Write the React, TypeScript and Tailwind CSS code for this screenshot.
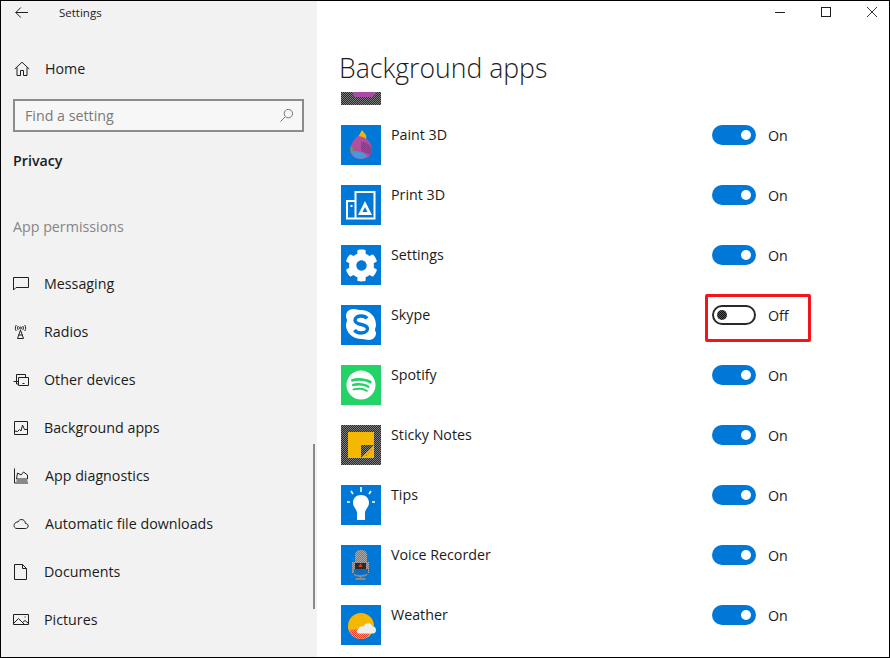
import type { ReactNode } from "react";
import { FaCog, FaSpotify } from "react-icons/fa";

const font = "font-['Open_Sans','Noto_Sans',sans-serif]";

function Glyph({ children, className = "" }: { children: ReactNode; className?: string }) {
  return (
    <svg viewBox="0 0 16 16" width="16" height="16" fill="none" stroke="#1f1f1f" strokeWidth="1" className={className}>
      {children}
    </svg>
  );
}

const navItems: { label: string; gap: string; icon: ReactNode }[] = [
  {
    label: "Messaging",
    gap: "ml-[15px]",
    icon: <path d="M.5 1.500h15v10H3l-2.500 2.500z" />,
  },
  {
    label: "Radios",
    gap: "ml-[15px]",
    icon: (
      <>
        <path d="M7.500 6 4.500 14.500M7.500 6l3 8.500M5.500 11h4M4.500 14.500h6" />
        <circle cx="7.500" cy="4" r="1" />
        <path d="M5.300 2c-.9 1.300-.9 2.700 0 4M9.700 2c.9 1.300.9 2.700 0 4M3.300 1c-1.300 2-1.300 4.500 0 6M11.700 1c1.300 2 1.300 4.500 0 6" />
      </>
    ),
  },
  {
    label: "Other devices",
    gap: "ml-[15px]",
    icon: <path d="M3.500 9.500V2.500h9v3M.5 9.500h5M5.500 5.500h10v8h-10zM9.500 11.500h2M3.500 9.500v2.500h2" />,
  },
  {
    label: "Background apps",
    gap: "ml-[15px]",
    icon: <path d="M1.500 1.500h13v13h-13zM1.500 11l3 .5 2-2 1.500 1.500 1.500-6 2 4.500h3" />,
  },
  {
    label: "App diagnostics",
    gap: "ml-[16px]",
    icon: <path d="M1.500.5v14.500h13.500M3.500 11l1-6 3.500 2 2.500-3 4 3v4zM3.500 13h11" />,
  },
  {
    label: "Automatic file downloads",
    gap: "ml-[16px]",
    icon: <path d="M4 12.500h8.500c3.500 0 3.500-5 0-5-.5-5-6.500-5-7.500-1.500C.5 5.500-.5 12.500 4 12.500z" />,
  },
  {
    label: "Documents",
    gap: "ml-[15px]",
    icon: <path d="M1.500 .5h8l4 4v11h-12zM9.500 .5v4h4" />,
  },
  {
    label: "Pictures",
    gap: "ml-[15px]",
    icon: <path d="M.5 2.500h15v10H.5zM.5 11.500l5-5 6 6M9.500 10.500l2.500-2 3.500 3M11.500 5h1" />,
  },
];

// the reference was saved with few colours, so fills come out as a 2px dither
function Dots({ id, base, dot }: { id: string; base: string; dot: string }) {
  return (
    <defs>
      <pattern id={id} width="2" height="2" patternUnits="userSpaceOnUse">
        <rect width="2" height="2" fill={base} />
        <rect width="1" height="1" fill={dot} />
        <rect x="1" y="1" width="1" height="1" fill={dot} />
      </pattern>
    </defs>
  );
}

function Tile({ children }: { children: ReactNode }) {
  return (
    <svg viewBox="0 0 40 40" width="40" height="40" className="block shrink-0">
      {children}
    </svg>
  );
}

const blue = <rect width="40" height="40" fill="#0078d7" />;

const apps: { name: string; off?: boolean; tile: ReactNode }[] = [
  {
    name: "Paint 3D",
    tile: (
      <Tile>
        <Dots id="paintRed" base="#e0303f" dot="#8a3d8c" />
        {blue}
        <path d="M21 5l4 5 .5 6-9-3z" fill="#f2b600" />
        <path d="M17 11c-4 3-8 9-8 14 0 5 4 9 11 9 7 0 11-4 11-10 0-6-5-12-14-13z" fill="#b3509c" />
        <path d="M20 17c5-1 9 3 11 7 0 3-1 5-2 6l-9-4z" fill="url(#paintRed)" />
        <path d="M10 26c5 0 11 0 16 5-2 2-4 3-6 3-5 0-9-3-10-8z" fill="#4a98d8" />
        <path d="M9 22l3 1-1 6c-1-2-2-4-2-7z" fill="#36b56a" />
      </Tile>
    ),
  },
  {
    name: "Print 3D",
    tile: (
      <Tile>
        {blue}
        <path d="M14.500 16V7h19v26.500h-19M14.500 16H6v17.500h8.500z" fill="none" stroke="#fff" strokeWidth="2" />
        <path d="M24 16 17 30h14zM24 22l-2.500 5h5z" fill="#fff" fillRule="evenodd" />
        <rect x="9.500" y="20" width="2" height="2" fill="#fff" />
      </Tile>
    ),
  },
  {
    name: "Settings",
    tile: (
      <div className="flex h-10 w-10 items-center justify-center bg-[#0078d7]">
        <FaCog size={33} color="#fff" />
      </div>
    ),
  },
  {
    name: "Skype",
    off: true,
    tile: (
      <Tile>
        {blue}
        <path d="M12 4c3 0 4 1 8 1 8 0 15 6 15 15 0 2-1 3-1 5 0 1 1 2 1 3 0 4-3 7-7 7-3 0-4-1-7-1C12 34 5 28 5 20c0-2 1-3 1-5 0-1-1-2-1-4 0-4 3-7 7-7z" fill="#fff" />
        <path d="M26 13.500c-1-1.500-3-2.500-6-2.500-3.500 0-6 1.500-6 4.200 0 5.800 12.500 2.800 12.500 8.600 0 2.700-3 4.200-6.500 4.200-3 0-5.200-1-6.500-3" fill="none" stroke="#0078d7" strokeWidth="3.400" />
      </Tile>
    ),
  },
  {
    name: "Spotify",
    tile: (
      <div className="flex h-10 w-10 items-center justify-center bg-[#23d366]">
        <FaSpotify size={30} color="#fff" />
      </div>
    ),
  },
  {
    name: "Sticky Notes",
    tile: (
      <Tile>
        <Dots id="sticky" base="#2a2a2a" dot="#7c7c7c" />
        <rect width="40" height="40" fill="url(#sticky)" />
        <rect x="7" y="7" width="26" height="26" fill="#f5b800" />
        <path d="M20 20h13L20 33z" fill="url(#sticky)" />
        <path d="M25 31l7-8" stroke="#e8452a" strokeWidth="1" strokeDasharray="1.500 2" />
      </Tile>
    ),
  },
  {
    name: "Tips",
    tile: (
      <Tile>
        {blue}
        <path d="M20 10c-5 0-8 3.500-8 8 0 3.500 3 5.500 4 9v8h8v-8c1-3.500 4-5.500 4-9 0-4.500-3-8-8-8z" fill="#fff" />
        <path d="M20 2v5M10 6l2 3M30 6l-2 3M6 17h3M31 17h3" stroke="#fff" strokeWidth="1.600" />
      </Tile>
    ),
  },
  {
    name: "Voice Recorder",
    tile: (
      <Tile>
        <Dots id="mic" base="#7a7a7a" dot="#a8a8a8" />
        {blue}
        <rect x="14" y="5" width="12" height="21" rx="5" fill="url(#mic)" />
        <rect x="11" y="17" width="17" height="11" fill="url(#mic)" />
        <path d="M13 24h14v5H13z" fill="#1669b5" />
        <path d="M14 18h11v6H14z" fill="#2a2a2a" />
        <path d="M19.500 18l2 4h-4z" fill="#e33a24" />
        <path d="M13 29c1 1.500 3 2 6.500 2s5.500-.5 6.500-2" fill="none" stroke="#8a8a8a" strokeWidth="1.600" />
        <path d="M19.500 31v3M14.500 34h10" stroke="#8a8a8a" strokeWidth="2" />
      </Tile>
    ),
  },
  {
    name: "Weather",
    tile: (
      <Tile>
        <Dots id="sunset" base="#f5b800" dot="#e8412a" />
        {blue}
        <circle cx="20" cy="21" r="13" fill="#f5b800" />
        <path d="M8 25c3 0 6-1 9-1l12 5c-2 3-5 5-9 5-6 0-10-4-12-9z" fill="url(#sunset)" />
        <path d="M18 28.500c-2.500 0-3.500-3.500-.5-4.500 0-2 3-3.500 5-2.500 1.500-4.500 8-4 9 0 2.500 0 3.500 1.500 3.500 3.500s-1 3.500-3 3.500z" fill="#eeeeee" />
      </Tile>
    ),
  },
];

function Toggle({ off }: { off?: boolean }) {
  if (off) {
    return (
      <div className="flex h-5 w-11 items-center rounded-full border-2 border-[#2a2a2a] bg-white pl-[3px]">
        <svg viewBox="0 0 10 10" width="10" height="10" className="block">
          <Dots id="thumb" base="#111111" dot="#555555" />
          <circle cx="5" cy="5" r="5" fill="url(#thumb)" />
        </svg>
      </div>
    );
  }
  return (
    <div className="flex h-5 w-11 items-center justify-end rounded-full bg-[#0078d7] pr-[5px]">
      <div className="h-[10px] w-[10px] rounded-full bg-white" />
    </div>
  );
}

export default function App() {
  return (
    <div className={`${font} relative flex h-[658px] w-[890px] overflow-hidden border border-black bg-white text-[14.25px] text-[#1b1b1b] antialiased`}>
      <aside className="relative flex w-[316px] shrink-0 flex-col bg-[#f2f2f2]">
        <div className="flex h-[24px] items-center pl-[14px]">
          <svg viewBox="0 0 13 11" width="13" height="11" fill="none" stroke="#1f1f1f" strokeWidth="1" className="-mt-[2px]">
            <path d="M13 5.500H.8M5.800.5l-5 5 5 5" />
          </svg>
          <span className="ml-[31px] text-[11.500px]">Settings</span>
        </div>

        <div className="mt-[20px] flex h-[48px] items-center pl-[13px]">
          <Glyph>
            <path d="M.8 8 8 1.200 15.200 8M3 6.500v8h3.500v-5h3v5H13v-8" />
          </Glyph>
          <span className="ml-[15px]">Home</span>
        </div>

        <div className="ml-[12px] mr-[13px] mt-[6px] flex h-[33px] items-center justify-between border-2 border-[#8c8c8c] bg-[#f7f7f7] pl-[10px] pr-[8px] text-[#7a7a7a]">
          <span>Find a setting</span>
          <svg viewBox="0 0 16 16" width="15" height="15" fill="none" stroke="#6f6f6f" strokeWidth="1">
            <circle cx="10" cy="6" r="4.500" />
            <path d="M6.800 9.200 1.500 14.500" />
          </svg>
        </div>

        <div className="mt-[19px] pl-[12px] font-semibold leading-[20px]">Privacy</div>
        <div className="mt-[46px] pl-[12px] leading-[20px] text-[#858585]">App permissions</div>

        <nav className="mt-[23px] flex flex-col">
          {navItems.map((item) => (
            <div key={item.label} className="flex h-[48px] items-center pl-[12px]">
              <Glyph>{item.icon}</Glyph>
              <span className={item.gap}>{item.label}</span>
            </div>
          ))}
        </nav>

        <div className="absolute left-[312px] top-[443px] h-[165px] w-[2px] bg-[#8a8a8a]" />
      </aside>

      <main className="flex min-w-0 flex-1 flex-col">
        <div className="flex h-[22px] items-center justify-end gap-[36px] pr-[12px]">
          <div className="h-px w-[10px] bg-[#1f1f1f]" />
          <div className="h-[10px] w-[10px] border border-[#1f1f1f]" />
          <svg viewBox="0 0 10 10" width="10" height="10" fill="none" stroke="#1f1f1f" strokeWidth="0.900">
            <path d="M0 0l10 10M10 0 0 10" />
          </svg>
        </div>

        <h1 className="ml-[22px] mt-[22px] text-[26.600px] font-light leading-[46px]">Background apps</h1>

        <div className="mt-[1px] min-h-0 flex-1 overflow-hidden pl-[24px]">
          <div className="flex h-[13px] items-end overflow-hidden">
            <Tile>
              <Dots id="partial" base="#2a2a2a" dot="#7c7c7c" />
              <rect width="40" height="40" fill="url(#partial)" />
              <path d="M12 27h23l-3 5H13z" fill="#a84aa8" />
            </Tile>
          </div>
          <div className="flex flex-col pt-[20px]">
            {apps.map((app) => (
              <div key={app.name} className="relative flex h-[60px] items-start">
                {app.tile}
                <span className="ml-[10px] w-[321px] leading-[20px]">{app.name}</span>
                <Toggle off={app.off} />
                <span className="ml-[12px] mt-px leading-[20px]">{app.off ? "Off" : "On"}</span>
                {app.off && (
                  <div className="absolute left-[364px] top-[-11px] h-[48px] w-[106px] rounded-[2px] border-[3px] border-[#f5141a]" />
                )}
              </div>
            ))}
          </div>
        </div>
      </main>
    </div>
  );
}
